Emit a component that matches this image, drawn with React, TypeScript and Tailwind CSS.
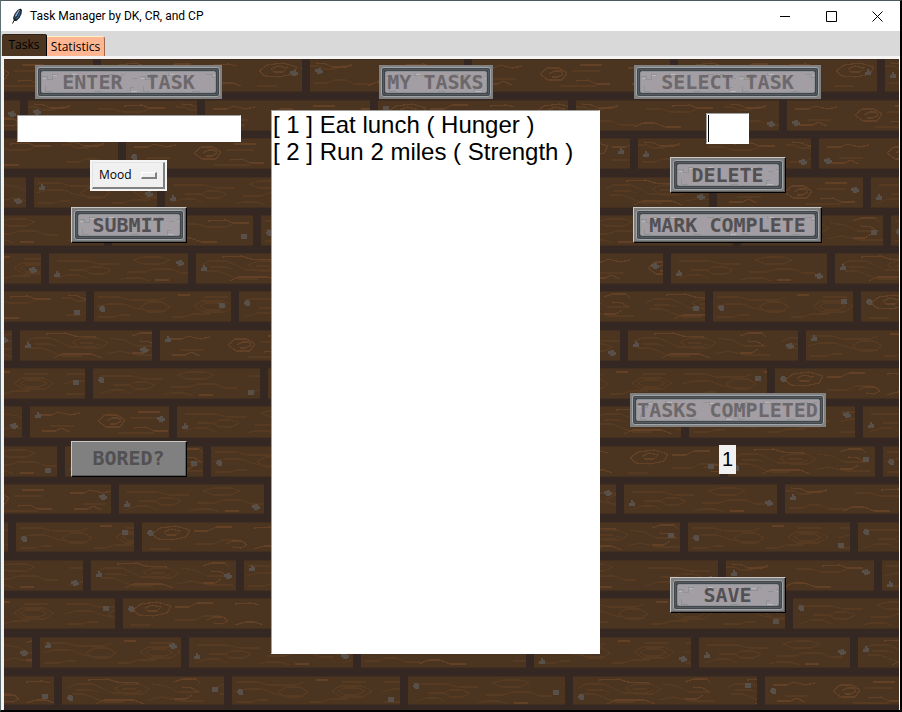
import type { ButtonHTMLAttributes, ReactNode } from "react";

/* Wall of planks: vertical span of each row and the left edge of each joint. */
const WALL_W = 895;
const JOINT = 8;
const ROWS: { y: number; h: number; joints: number[] }[] = [
  { y: 0, h: 33, joints: [89, 298, 460, 666, 873] },
  { y: 41, h: 31, joints: [16, 193, 366, 564, 775] },
  { y: 79, h: 31, joints: [114, 400, 626, 807] },
  { y: 118, h: 31, joints: [22, 153, 440, 705, 859] },
  { y: 156, h: 31, joints: [100, 249, 500, 729, 879] },
  { y: 194, h: 31, joints: [37, 184, 420, 659, 823] },
  { y: 232, h: 31, joints: [82, 227, 480, 701, 849] },
  { y: 271, h: 31, joints: [8, 148, 390, 616, 794] },
  { y: 309, h: 31, joints: [81, 256, 520, 763] },
  { y: 347, h: 32, joints: [18, 165, 430, 677, 851] },
  { y: 387, h: 31, joints: [53, 199, 460, 716, 871] },
  { y: 425, h: 30, joints: [107, 260, 400, 612, 773] },
  { y: 463, h: 30, joints: [4, 130, 380, 676, 846] },
  { y: 501, h: 31, joints: [79, 232, 480, 714, 870] },
  { y: 539, h: 31, joints: [111, 340, 560, 781] },
  { y: 578, h: 31, joints: [28, 177, 349, 522, 687, 846] },
  { y: 617, h: 29, joints: [50, 220, 396, 561, 753] },
];

/* Grain drawings, each made for a plank about 150 wide and 31 high. */
const OPEN_GRAINS = [
  {
    soft: "M0 7h9l5 3h12l6-3h10M4 24h14l6-3h12l8 4h16M70 9h16l8 3h20l9-4h14",
    hard: "M6 4l10 1 6 3h15l5-3M58 27l9-4h12l10 4h16M96 6l18-1 7 3h16",
  },
  {
    soft: "M20 20h24M100 12h28M88 27h36",
    hard: "M8 9h14l6-3 12 3 10-2M68 15l7-6h12l8 5-5 7H76l-8-6M77 15l5-3h7l2 3-5 3h-6M12 25h14l5-3 9 4M108 6h22M104 22l12-1 8 4h14",
  },
  {
    soft: "M52 22h20l8-4h16M8 27h20",
    hard: "M10 12l8-6 16-2 14 4-4 7-14 3-14-1-6-5M22 10l7-3 9 2-4 4h-9l-3-3M52 9h14l8-4h16M112 6l16-1 8 2M84 22l6-3h10l5 4-6 3-8-1M112 27l10-3h10l8 3",
  },
];

const DENSE_GRAINS = [
  {
    soft: "M6 12l7-4h18l9 4 10 5h22l8-3M10 18h12l8 3 12 5h20M52 12l10-4h16l10 5-8 5H62l-10-6M60 13h14M90 8l14 2 12 6h22M86 24l14-3 18 4h24M14 14h16l6 2",
    hard: "M26 4l20-1 8 3 22 1M34 28l8-4h30l10 4M112 6l8-3h14l4 4M120 11l10 1 6 4M112 23h12l6-4",
  },
  {
    soft: "M4 6h22l10 3h28l8-3M2 16l12-3h16l10 4 14 3h18M46 16l8-5h14l8 5-8 5H54l-8-5M100 15l8-5h22l10 5-9 6h-22l-9-6M106 15l6-3h14l7 3-7 4h-14l-6-4M78 26h12l8-3h18M4 26h16l6-2h10M110 6h24",
    hard: "M84 4h12",
  },
  {
    soft: "M8 8h30l12 3h20M20 17h16l6-3h12l8 3-7 4H42l-6-4M84 7l12-3h16l9 3-9 4H94l-10-4M78 19h18l8-3h18l10 4h12M6 26l12-4h12l8 4M70 27l8-2h14l8 3",
    hard: "M106 27h14",
  },
];

const NAILS = ["M1 0h4l1 2v4H2L0 4z", "M0 0h6v5H0z", "M2 0h2v2h2v4H0V3h2z", "M0 1h3V0h3v2h2v3H6v1H2V4H0z"];

function Plank({ x, y, w, h, kind }: { x: number; y: number; w: number; h: number; kind: number }) {
  const open = kind < 0 || kind % 5 === 2;
  const n = Math.abs(kind);
  const grain = (open ? OPEN_GRAINS : DENSE_GRAINS)[n % 3];
  return (
    <svg x={x} y={y} width={w} height={h}>
      <rect width={w} height={h} fill="#4c3520" />
      <g fill="none" strokeWidth="1.2">
        {[0, 148, 296].map((shift) => (
          <g key={shift} transform={`translate(${shift} 0)`}>
            <path d={grain.soft} stroke="#573a22" />
            <path d={grain.hard} stroke="#634126" />
          </g>
        ))}
      </g>
      <path d={`M0 0H${w}M0 ${h}H${w}`} stroke="#422f20" strokeWidth="2" />
      <path d={NAILS[n % 4]} transform={`translate(5 ${5 + ((n * 7) % 17)})`} fill="#595049" />
      <path d={NAILS[(n + 1) % 4]} transform={`translate(${w - 12} ${6 + ((n * 11) % 17)})`} fill="#595049" />
    </svg>
  );
}

function WoodWall() {
  return (
    <svg aria-hidden="true" className="absolute inset-0 h-full w-full" shapeRendering="crispEdges">
      {ROWS.map((row, r) => {
        const starts = [-90, ...row.joints.map((j) => j + JOINT)];
        const ends = [...row.joints, WALL_W + 60];
        return starts.map((start, i) => (
          <Plank
            key={`${r}-${i}`}
            x={start}
            y={row.y}
            w={ends[i] - start}
            h={row.h}
            kind={r < 3 ? -(r + i + 1) : r * 2 + i * 4}
          />
        ));
      })}
    </svg>
  );
}

/* Stone slab with a dark iron rim, shared by headings and buttons. */
function Slab({ children }: { children: ReactNode }) {
  return (
    <span className="flex h-full w-full rounded-[3px] border border-[#a2a5a7] bg-[#42474c] p-px">
      <span className="flex flex-1 rounded-[2px] border border-[#555b60] p-px">
        <span className="relative flex flex-1 items-center justify-center rounded-[2px] border border-[#8f9395] bg-[#a39ea3]">
          <svg aria-hidden="true" className="absolute inset-0 h-full w-full" shapeRendering="crispEdges">
            <defs>
              <pattern id="cracks" width="98" height="24" patternUnits="userSpaceOnUse">
                <path
                  d="M0 4h5v3h5V2h6M3 14v5h6v2h5M28 1v2h9M44 21h8v-2h7v2h8M66 2h6v3h7V2h4M88 20v-5h4M90 6h5"
                  fill="none"
                  stroke="#8f9492"
                />
                <path d="M1 6h3M11 3h4M5 20h5M30 2h5M48 22h6M73 3h5M89 19h6" fill="none" stroke="#bab8ba" />
              </pattern>
            </defs>
            <rect width="100%" height="100%" fill="url(#cracks)" />
          </svg>
          {children}
        </span>
      </span>
    </span>
  );
}

const carved = "relative font-['DejaVu_Sans_Mono',monospace] text-[20px] leading-[18px] font-bold whitespace-pre";

function Plaque({ width, children }: { width: string; children: ReactNode }) {
  return (
    <h2 className={`h-[34px] ${width} bg-[#808080] p-[2px]`}>
      <Slab>
        <span className={`${carved} text-[#6c686b]`}>{children}</span>
      </Slab>
    </h2>
  );
}

const raised =
  "h-9 border border-t-[#c8c8c8] border-r-black border-b-black border-l-[#c8c8c8] bg-[#808080] shadow-[inset_-1px_-1px_0_#5c5c5c]";

function StoneButton({
  width,
  children,
  ...rest
}: { width: string; children: ReactNode } & ButtonHTMLAttributes<HTMLButtonElement>) {
  return (
    <button type="button" className={`${raised} ${width} p-[2px]`} {...rest}>
      <Slab>
        <span className={`${carved} text-[#525053]`}>{children}</span>
      </Slab>
    </button>
  );
}

const sunken = "border border-t-[#a0a0a0] border-r-white border-b-white border-l-[#a0a0a0] bg-white outline-none";

function TitleBar() {
  return (
    <header className="flex h-[30px] items-center bg-white">
      <svg aria-hidden="true" className="ml-[10px] h-4 w-3" viewBox="0 0 12 16">
        <path d="M9.500 0.500L11 2l-.5 4-2 4-3 3H3L2 10l1.500-4 3-4z" fill="#20262e" />
        <path d="M9 1.500L7 3 4.500 6.500 3.500 10l1 1.500z" fill="#5a9be0" />
        <path d="M9.500 2.500L9 6l-2 4-2 1.500z" fill="#3b6ea8" />
        <path d="M9.500 1L5 9 1.500 15.500" fill="none" stroke="#111" />
        <path d="M8.500 2L5 8" fill="none" stroke="#cfe5fa" strokeWidth=".7" />
      </svg>
      <h1 className="ml-[7px] flex-1 font-['Roboto','Open_Sans',sans-serif] text-[12px] leading-4 text-black">
        Task Manager by DK, CR, and CP
      </h1>
      {[
        { name: "Minimize", d: "M0 5.500h10" },
        { name: "Maximize", d: "M.5.5h10v10H.5z" },
        { name: "Close", d: "M.5.5l10 10M10.500.5l-10 10" },
      ].map((c) => (
        <button key={c.name} type="button" aria-label={c.name} className="flex h-full w-[46px] items-center justify-center">
          <svg className="h-[11px] w-[11px]" viewBox="0 0 11 11">
            <path d={c.d} fill="none" stroke="#000" />
          </svg>
        </button>
      ))}
    </header>
  );
}

export default function App() {
  return (
    <div className="flex min-h-screen flex-col border-t border-r-2 border-b-2 border-l border-t-[#4c5c5e] border-r-black border-b-black border-l-[#5e7072] bg-[#d9d9d9] font-['Open_Sans','Noto_Sans',sans-serif]">
      <TitleBar />
      <nav role="tablist" className="flex h-[25px] items-end pl-px text-[12px] leading-4 text-black">
        <button
          type="button"
          role="tab"
          aria-selected="true"
          className="h-[22px] w-[45px] rounded-t-[2px] border-t border-r border-t-[#2e2013] border-r-black bg-[#4c3520] pb-px"
        >
          Tasks
        </button>
        <button
          type="button"
          role="tab"
          aria-selected="false"
          className="h-5 w-[58px] rounded-tr-[3px] border-t border-r border-t-[#fff3c4] border-r-[#a0664c] bg-[#ffb693]"
        >
          Statistics
        </button>
      </nav>
      <div className="flex flex-1 border-t-3 border-r border-l-3 border-t-[#f4f4f4] border-r-white border-l-[#f4f0f4]">
        <main className="relative flex-1 overflow-hidden bg-[#352722]">
          <WoodWall />
          <div className="relative grid grid-cols-[249fr_365fr_219fr] pt-[6px] pr-[62px]">
            <section className="flex flex-col items-center">
              <Plaque width="w-[187px]">{"ENTER  TASK"}</Plaque>
              <input aria-label="Enter task" className={`mt-4 h-[27px] w-56 px-1 text-[12px] ${sunken}`} />
              <div className="relative mt-[18px] h-[31px] w-[77px] border-2 border-[#f4f4f4]">
                <select
                  aria-label="Attribute"
                  className="block h-full w-full appearance-none border border-r-2 border-b-2 border-t-[#e3e3e3] border-r-[#808080] border-b-[#808080] border-l-[#e3e3e3] bg-[#f0f0f0] pl-[6px] text-[12px] leading-4 text-black outline-none"
                >
                  <option>Mood</option>
                  <option>Hunger</option>
                  <option>Strength</option>
                </select>
                <span className="pointer-events-none absolute top-[10px] right-2 h-[7px] w-4 border border-r-2 border-b-2 border-t-white border-r-[#808080] border-b-[#808080] border-l-white bg-[#f0f0f0]" />
              </div>
              <div className="mt-4 flex flex-col items-center gap-[198px]">
                <StoneButton width="w-[116px]">SUBMIT</StoneButton>
                <button type="button" className={`${raised} w-[116px]`}>
                  <span className={`${carved} text-[#525053]`}>BORED?</span>
                </button>
              </div>
            </section>

            <section className="flex flex-col items-center">
              <Plaque width="w-[114px]">MY TASKS</Plaque>
              <textarea
                aria-label="My tasks"
                readOnly
                className={`mt-[11px] h-[544px] w-[329px] resize-none pl-px font-['Liberation_Sans',sans-serif] text-[24px] leading-[27px] text-black ${sunken}`}
                defaultValue={"[ 1 ] Eat lunch ( Hunger )\n[ 2 ] Run 2 miles ( Strength )"}
              />
            </section>

            <section className="flex flex-col items-center">
              <Plaque width="w-[187px]">SELECT TASK</Plaque>
              <div className={`mt-[14px] flex h-[31px] w-[43px] p-px ${sunken}`}>
                <span className="h-[27px] w-px bg-black" />
                <input
                  aria-label="Select task"
                  className="w-full min-w-0 font-['Liberation_Sans',sans-serif] text-[20px] caret-transparent outline-none"
                />
              </div>
              <div className="mt-[13px] flex flex-col items-center gap-[14px]">
                <StoneButton width="w-[116px]">DELETE</StoneButton>
                <StoneButton width="w-[189px]">MARK COMPLETE</StoneButton>
              </div>
              <div className="mt-[150px] flex flex-col items-center">
                <Plaque width="w-[196px]">TASKS COMPLETED</Plaque>
                <output className="mt-[18px] h-[29px] w-[17px] bg-[#f0f0f0] text-center font-['Liberation_Sans',sans-serif] text-[20px] leading-[29px] text-black">
                  1
                </output>
              </div>
              <div className="mt-[103px]">
                <StoneButton width="w-[116px]">SAVE</StoneButton>
              </div>
            </section>
          </div>
        </main>
      </div>
    </div>
  );
}
